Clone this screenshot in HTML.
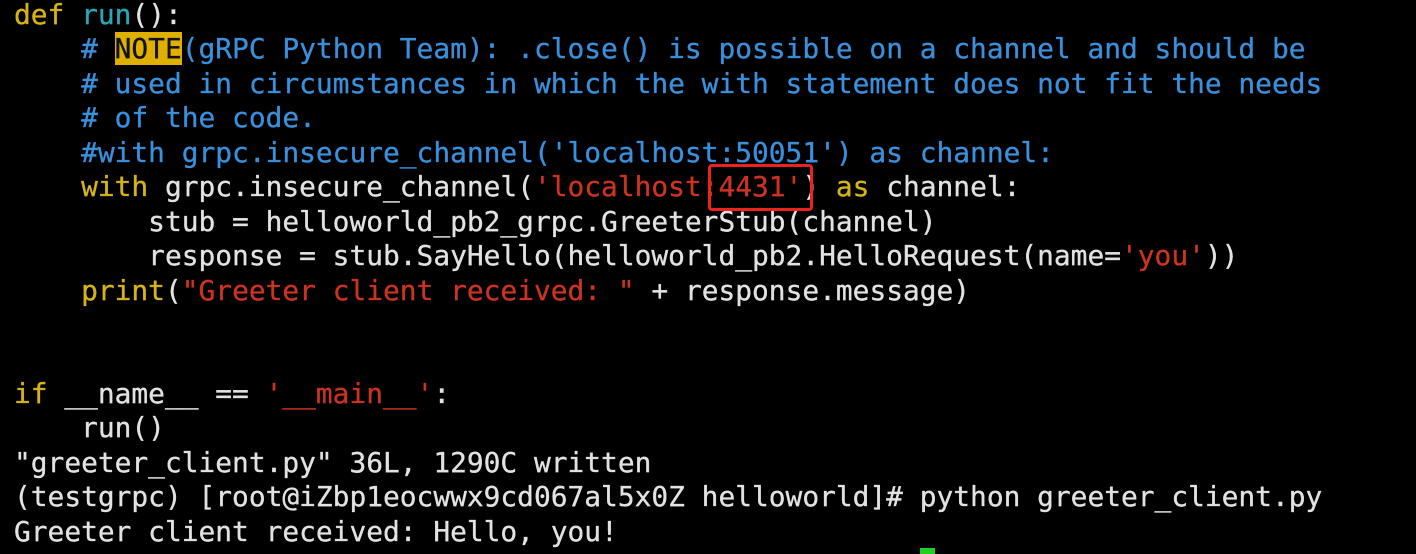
<!DOCTYPE html>
<html><head><meta charset="utf-8"><style>
html,body{margin:0;padding:0;background:#000;width:1416px;height:552px;overflow:hidden}
pre{position:absolute;left:14px;top:-2px;margin:0;font-family:"DejaVu Sans Mono","Liberation Mono",monospace;font-size:27.86px;line-height:34.45px;color:#e2e2e2;white-space:pre;-webkit-text-stroke:0.3px}
.y{color:#d6b418}.c{color:#2ba6b4}.b{color:#3a90dc}.r{color:#cc3322}
.n{background:#e0b000;color:#111}
.box{position:absolute;left:708px;top:164px;width:99px;height:41px;border:3px solid #ee2020;border-radius:4px}
.cur{position:absolute;left:920px;top:548px;width:15px;height:6px;background:#20d020}
</style></head><body>
<pre><span class="y">def</span> <span class="c">run</span>():
    <span class="b"># <span class="n">NOTE</span>(gRPC Python Team): .close() is possible on a channel and should be</span>
    <span class="b"># used in circumstances in which the with statement does not fit the needs</span>
    <span class="b"># of the code.</span>
    <span class="b">#with grpc.insecure_channel('localhost:50051') as channel:</span>
    <span class="y">with</span> grpc.insecure_channel(<span class="r">'localhost:4431'</span>) <span class="y">as</span> channel:
        stub = helloworld_pb2_grpc.GreeterStub(channel)
        response = stub.SayHello(helloworld_pb2.HelloRequest(name=<span class="r">'you'</span>))
    <span class="y">print</span>(<span class="r">"Greeter client received: "</span> + response.message)


<span class="y">if</span> __name__ == <span class="r">'__main__'</span>:
    run()
"greeter_client.py" 36L, 1290C written
(testgrpc) [root@iZbp1eocwwx9cd067al5x0Z helloworld]# python greeter_client.py
Greeter client received: Hello, you!</pre>
<div class="box"></div>
<div class="cur"></div>
</body></html>
